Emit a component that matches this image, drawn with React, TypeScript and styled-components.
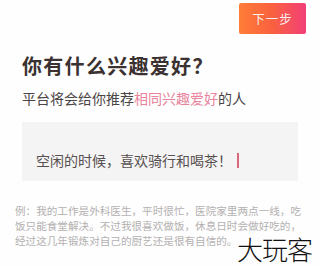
import React from "react";
import styled, { createGlobalStyle } from "styled-components";

const GlobalStyle = createGlobalStyle`
  html, body {
    margin: 0;
    padding: 0;
    background: #ffffff;
  }
  body {
    font-family: "Noto Sans CJK SC", "Noto Sans", sans-serif;
  }
`;

const Page = styled.div`
  position: relative;
  width: 320px;
  height: 266px;
  overflow: hidden;
  background: #fefefe;
`;

const TopBar = styled.div`
  display: flex;
  justify-content: flex-end;
  padding: 3px 14px 0 0;
`;

const NextButton = styled.button`
  width: 67px;
  height: 31px;
  border: none;
  border-radius: 2px;
  background: linear-gradient(90deg, #ff7d37 0%, #f9613f 50%, #f23f78 100%);
  color: rgba(255, 255, 255, 0.92);
  font-family: "Noto Sans CJK SC", sans-serif;
  font-size: 12.5px;
  padding: 0;
  letter-spacing: 1px;
`;

const Content = styled.div`
  padding: 22px 22px 0 22px;
`;

const Title = styled.h1`
  margin: 0;
  font-size: 20px;
  line-height: 20px;
  font-weight: 700;
  letter-spacing: 1.3px;
  color: #3b3131;
`;

const Subtitle = styled.p`
  margin: 12px 0 0 0;
  font-size: 14px;
  line-height: 20px;
  color: #4a4444;
`;

const Highlight = styled.span`
  color: #e9849c;
`;

const InputBox = styled.div`
  margin-top: 14px;
  height: 59px;
  box-sizing: border-box;
  padding: 28px 14px 11px 14px;
  background: #f5f4f4;
  display: flex;
  align-items: center;
`;

const InputText = styled.span`
  font-size: 14px;
  line-height: 20px;
  color: #575050;
`;

const Caret = styled.span`
  display: inline-block;
  width: 2px;
  height: 15px;
  margin-left: 5px;
  background: #d9687f;
`;

const Example = styled.p`
  margin: 22px 0 0 0;
  padding: 0 15px;
  font-size: 10.6px;
  line-height: 15px;
  color: #b3b0b0;
  white-space: nowrap;
`;

const Watermark = styled.div`
  position: absolute;
  left: 237px;
  top: 234px;
  font-size: 26px;
  line-height: 30px;
  font-weight: 300;
  color: #111111;
  letter-spacing: -1px;
`;

export default function App() {
  return (
    <Page>
      <GlobalStyle />
      <TopBar>
        <NextButton>下一步</NextButton>
      </TopBar>
      <Content>
        <Title>你有什么兴趣爱好？</Title>
        <Subtitle>
          平台将会给你推荐<Highlight>相同兴趣爱好</Highlight>的人
        </Subtitle>
        <InputBox>
          <InputText>空闲的时候，喜欢骑行和喝茶！</InputText>
          <Caret />
        </InputBox>
      </Content>
      <Example>
        例：我的工作是外科医生，平时很忙，医院家里两点一线，吃
        <br />
        饭只能食堂解决。不过我很喜欢做饭，休息日时会做好吃的，
        <br />
        经过这几年锻炼对自己的厨艺还是很有自信的。
      </Example>
      <Watermark>大玩客</Watermark>
    </Page>
  );
}
